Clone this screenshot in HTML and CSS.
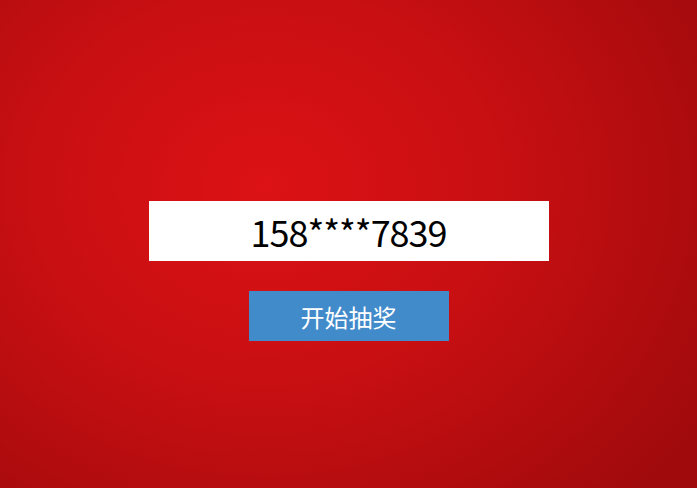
FILE: index.html
```html
<!DOCTYPE html>
<html lang="zh">
<head>
<meta charset="utf-8">
<link rel="stylesheet" href="styles.css">
</head>
<body>
<main class="stage">
  <div class="phone">158****7839</div>
  <button class="draw">开始抽奖</button>
</main>
</body>
</html>
```
FILE: styles.css
```css
html, body {
  margin: 0;
  height: 100%;
}
body {
  background: radial-gradient(ellipse 75% 90% at 38% 38%, #dc1215 0%, #c80f12 45%, #a00a0c 100%);
  font-family: "Noto Sans CJK SC", sans-serif;
  overflow: hidden;
}
.stage {
  display: flex;
  flex-direction: column;
  align-items: center;
  padding-top: 201px;
  gap: 30px;
}
.phone {
  width: 400px;
  height: 60px;
  background: #fff;
  color: #000;
  font-size: 36px;
  letter-spacing: -1px;
  line-height: 60px;
  text-align: center;
}
.draw {
  width: 200px;
  height: 50px;
  border: none;
  background: #428bca;
  color: #fff;
  font-family: "Noto Sans CJK SC", sans-serif;
  font-size: 24px;
  padding: 0;
}
```
